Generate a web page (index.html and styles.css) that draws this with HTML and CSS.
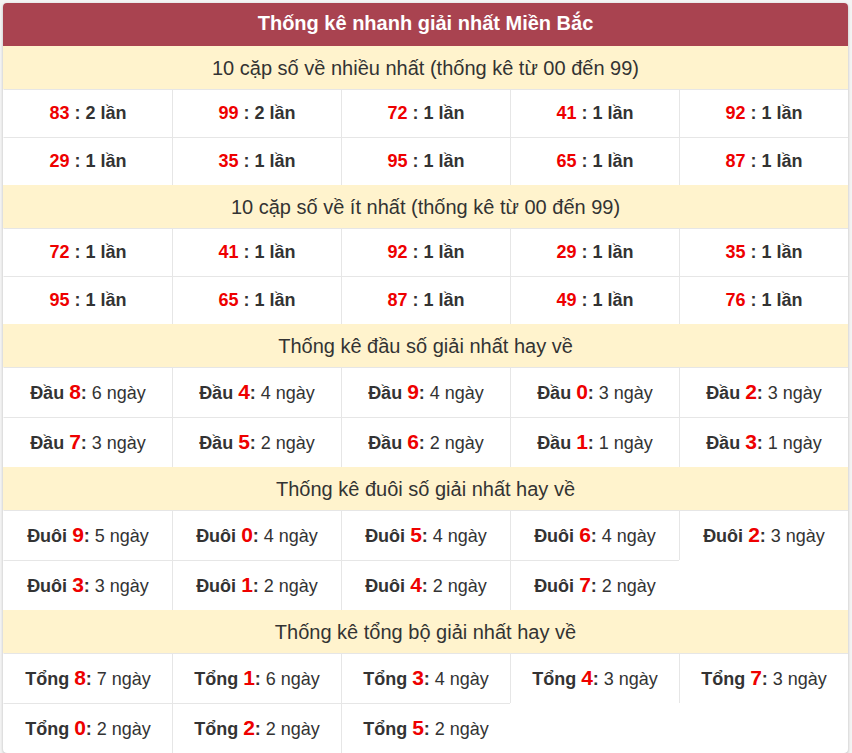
FILE: index.html
```html
<!DOCTYPE html>
<html lang="vi">
<head>
<meta charset="utf-8">
<title>Thống kê nhanh giải nhất Miền Bắc</title>
<link rel="stylesheet" href="styles.css">
</head>
<body>
<div class="box">
  <div class="title">Thống kê nhanh giải nhất Miền Bắc</div>

  <div class="head">10 cặp số về nhiều nhất (thống kê từ 00 đến 99)</div>
  <div class="grid pairs">
    <div class="cell"><span class="n">83</span> : 2 lần</div>
    <div class="cell"><span class="n">99</span> : 2 lần</div>
    <div class="cell"><span class="n">72</span> : 1 lần</div>
    <div class="cell"><span class="n">41</span> : 1 lần</div>
    <div class="cell"><span class="n">92</span> : 1 lần</div>
    <div class="cell"><span class="n">29</span> : 1 lần</div>
    <div class="cell"><span class="n">35</span> : 1 lần</div>
    <div class="cell"><span class="n">95</span> : 1 lần</div>
    <div class="cell"><span class="n">65</span> : 1 lần</div>
    <div class="cell"><span class="n">87</span> : 1 lần</div>
  </div>

  <div class="head">10 cặp số về ít nhất (thống kê từ 00 đến 99)</div>
  <div class="grid pairs">
    <div class="cell"><span class="n">72</span> : 1 lần</div>
    <div class="cell"><span class="n">41</span> : 1 lần</div>
    <div class="cell"><span class="n">92</span> : 1 lần</div>
    <div class="cell"><span class="n">29</span> : 1 lần</div>
    <div class="cell"><span class="n">35</span> : 1 lần</div>
    <div class="cell"><span class="n">95</span> : 1 lần</div>
    <div class="cell"><span class="n">65</span> : 1 lần</div>
    <div class="cell"><span class="n">87</span> : 1 lần</div>
    <div class="cell"><span class="n">49</span> : 1 lần</div>
    <div class="cell"><span class="n">76</span> : 1 lần</div>
  </div>

  <div class="head">Thống kê đầu số giải nhất hay về</div>
  <div class="grid stats">
    <div class="cell"><b>Đầu <span class="d">8</span>:</b> 6 ngày</div>
    <div class="cell"><b>Đầu <span class="d">4</span>:</b> 4 ngày</div>
    <div class="cell"><b>Đầu <span class="d">9</span>:</b> 4 ngày</div>
    <div class="cell"><b>Đầu <span class="d">0</span>:</b> 3 ngày</div>
    <div class="cell"><b>Đầu <span class="d">2</span>:</b> 3 ngày</div>
    <div class="cell"><b>Đầu <span class="d">7</span>:</b> 3 ngày</div>
    <div class="cell"><b>Đầu <span class="d">5</span>:</b> 2 ngày</div>
    <div class="cell"><b>Đầu <span class="d">6</span>:</b> 2 ngày</div>
    <div class="cell"><b>Đầu <span class="d">1</span>:</b> 1 ngày</div>
    <div class="cell"><b>Đầu <span class="d">3</span>:</b> 1 ngày</div>
  </div>

  <div class="head">Thống kê đuôi số giải nhất hay về</div>
  <div class="grid stats">
    <div class="cell"><b>Đuôi <span class="d">9</span>:</b> 5 ngày</div>
    <div class="cell"><b>Đuôi <span class="d">0</span>:</b> 4 ngày</div>
    <div class="cell"><b>Đuôi <span class="d">5</span>:</b> 4 ngày</div>
    <div class="cell"><b>Đuôi <span class="d">6</span>:</b> 4 ngày</div>
    <div class="cell"><b>Đuôi <span class="d">2</span>:</b> 3 ngày</div>
    <div class="cell"><b>Đuôi <span class="d">3</span>:</b> 3 ngày</div>
    <div class="cell"><b>Đuôi <span class="d">1</span>:</b> 2 ngày</div>
    <div class="cell"><b>Đuôi <span class="d">4</span>:</b> 2 ngày</div>
    <div class="cell"><b>Đuôi <span class="d">7</span>:</b> 2 ngày</div>
  </div>

  <div class="head">Thống kê tổng bộ giải nhất hay về</div>
  <div class="grid stats">
    <div class="cell"><b>Tổng <span class="d">8</span>:</b> 7 ngày</div>
    <div class="cell"><b>Tổng <span class="d">1</span>:</b> 6 ngày</div>
    <div class="cell"><b>Tổng <span class="d">3</span>:</b> 4 ngày</div>
    <div class="cell"><b>Tổng <span class="d">4</span>:</b> 3 ngày</div>
    <div class="cell"><b>Tổng <span class="d">7</span>:</b> 3 ngày</div>
    <div class="cell"><b>Tổng <span class="d">0</span>:</b> 2 ngày</div>
    <div class="cell"><b>Tổng <span class="d">2</span>:</b> 2 ngày</div>
    <div class="cell"><b>Tổng <span class="d">5</span>:</b> 2 ngày</div>
  </div>
</div>
</body>
</html>
```

FILE: styles.css
```css
html, body {
  margin: 0;
  padding: 0;
  background: #f4f4f4;
}

body {
  padding: 3px 4px 0 3px;
  font-family: "Liberation Sans", Arial, sans-serif;
  color: #333;
}

.box {
  background: #fff;
  border-radius: 4px;
  overflow: hidden;
  box-shadow: 0 1px 3px rgba(0, 0, 0, 0.25);
}

.title {
  background: #a94350;
  color: #fff;
  font-weight: bold;
  font-size: 20px;
  line-height: 23px;
  padding: 9px 0 11px;
  text-align: center;
}

.head {
  background: #fff3cd;
  font-size: 20px;
  line-height: 24px;
  padding: 10px 0 9px;
  text-align: center;
  color: #333;
}

.grid {
  display: grid;
  grid-template-columns: repeat(5, 1fr);
}

.cell {
  border-top: 1px solid #e6e6e6;
  border-left: 1px solid #e6e6e6;
  text-align: center;
  font-size: 18px;
  line-height: 24px;
  padding: 11px 0 12px;
  color: #333;
}

.cell:nth-child(5n+1) {
  border-left-color: transparent;
}

.pairs .cell {
  font-weight: bold;
}

.n {
  color: #e00;
}

.stats .cell {
  padding: 12px 0 12px;
}

.d {
  color: #e00;
  font-size: 21px;
}
```
